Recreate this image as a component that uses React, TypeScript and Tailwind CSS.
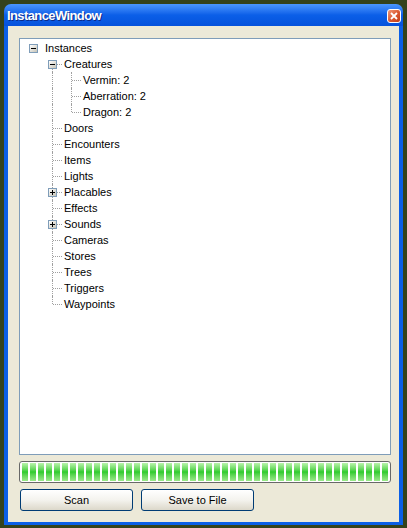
import React from 'react';

type Cell = 'none' | 'line' | 'tee' | 'ell' | 'first';

interface Row {
  label: string;
  cells: Cell[];
  box?: 'plus' | 'minus';
}

const rows: Row[] = [
  { label: 'Instances', cells: ['none'], box: 'minus' },
  { label: 'Creatures', cells: ['none', 'first'], box: 'minus' },
  { label: 'Vermin: 2', cells: ['none', 'line', 'tee'] },
  { label: 'Aberration: 2', cells: ['none', 'line', 'tee'] },
  { label: 'Dragon: 2', cells: ['none', 'line', 'ell'] },
  { label: 'Doors', cells: ['none', 'tee'] },
  { label: 'Encounters', cells: ['none', 'tee'] },
  { label: 'Items', cells: ['none', 'tee'] },
  { label: 'Lights', cells: ['none', 'tee'] },
  { label: 'Placables', cells: ['none', 'tee'], box: 'plus' },
  { label: 'Effects', cells: ['none', 'tee'] },
  { label: 'Sounds', cells: ['none', 'tee'], box: 'plus' },
  { label: 'Cameras', cells: ['none', 'tee'] },
  { label: 'Stores', cells: ['none', 'tee'] },
  { label: 'Trees', cells: ['none', 'tee'] },
  { label: 'Triggers', cells: ['none', 'tee'] },
  { label: 'Waypoints', cells: ['none', 'ell'] },
];

function ExpandBox({ kind }: { kind: 'plus' | 'minus' }) {
  return (
    <div className="absolute left-[5px] top-[4px] w-[9px] h-[9px] border border-[#7f9db9] bg-gradient-to-br from-white to-[#c6c3b6] flex items-center justify-center">
      <div className="relative w-[5px] h-[5px]">
        <div className="absolute left-0 top-[2px] w-[5px] h-px bg-black" />
        {kind === 'plus' && <div className="absolute left-[2px] top-0 w-px h-[5px] bg-black" />}
      </div>
    </div>
  );
}

function TreeCell({ type, box }: { type: Cell; box?: 'plus' | 'minus' }) {
  return (
    <div className="relative w-[19px] h-[16px] shrink-0">
      {(type === 'line' || type === 'tee') && (
        <div className="absolute left-[9px] top-0 h-[16px] border-l border-dotted border-[#a0a0a0]" />
      )}
      {type === 'ell' && (
        <div className="absolute left-[9px] top-0 h-[8px] border-l border-dotted border-[#a0a0a0]" />
      )}
      {type === 'first' && (
        <div className="absolute left-[9px] top-[8px] h-[8px] border-l border-dotted border-[#a0a0a0]" />
      )}
      {type !== 'none' && type !== 'line' && (
        <div className="absolute left-[10px] top-[8px] w-[9px] border-t border-dotted border-[#a0a0a0]" />
      )}
      {box && <ExpandBox kind={box} />}
    </div>
  );
}

function TreeView() {
  return (
    <div className="h-[417px] border border-[#7f9db9] bg-white pl-[4px] pt-px overflow-hidden">
      {rows.map((r) => (
        <div key={r.label} className="flex items-center h-[16px]">
          {r.cells.map((c, i) => (
            <TreeCell key={i} type={c} box={i === r.cells.length - 1 ? r.box : undefined} />
          ))}
          <span className="ml-px px-px text-[11px] leading-[16px] text-black whitespace-nowrap">{r.label}</span>
        </div>
      ))}
    </div>
  );
}

function ProgressBar() {
  const blocks = Array.from({ length: 46 });
  return (
    <div className="mt-[6px] h-[22px] border border-[#686868] rounded-[3px] bg-white px-[2px] py-px flex gap-[2px] overflow-hidden">
      {blocks.map((_, i) => (
        <div
          key={i}
          className="w-[6px] h-full shrink-0 bg-gradient-to-b from-[#b8f4aa] via-[#2ccb2c] to-[#9ae98a]"
        />
      ))}
    </div>
  );
}

function XpButton({ label }: { label: string }) {
  return (
    <button className="w-[113px] h-[22px] border border-[#003c74] rounded-[3px] bg-gradient-to-b from-white via-[#f4f3ee] to-[#dcd8ca] text-[11px] text-black leading-none">
      {label}
    </button>
  );
}

export default function App() {
  return (
    <div
      className="w-[407px] h-[528px] bg-[#34421c] pl-[4px] pt-[4px]"
      style={{ fontFamily: '"Liberation Sans", Arial, sans-serif' }}
    >
      <div className="w-[399px] h-[521px] flex flex-col rounded-t-[7px] overflow-hidden">
        <div className="h-[22px] shrink-0 flex items-center justify-between pl-[3px] pr-[2px] bg-gradient-to-b from-[#4a96ff] via-[#0b5fe8] to-[#0652dc]">
          <span className="mt-px text-[13px] font-bold text-white tracking-[-0.6px] [text-shadow:1px_1px_0_#0a2a8a]">InstanceWindow</span>
          <div className="w-[14px] h-[14px] rounded-[3px] border border-white bg-gradient-to-br from-[#ef9a78] via-[#dc5a32] to-[#c23c14] flex items-center justify-center mt-px">
            <svg width="8" height="8" viewBox="0 0 8 8">
              <path d="M1 1 L7 7 M7 1 L1 7" stroke="white" strokeWidth="1.8" />
            </svg>
          </div>
        </div>
        <div className="flex-1 border-x-4 border-b-[3px] border-[#0b5fe6] bg-[#ece9d8] pl-[11px] pr-[8px] pt-[12px] flex flex-col">
          <TreeView />
          <ProgressBar />
          <div className="mt-[6px] pl-px flex gap-[8px]">
            <XpButton label="Scan" />
            <XpButton label="Save to File" />
          </div>
        </div>
      </div>
    </div>
  );
}
